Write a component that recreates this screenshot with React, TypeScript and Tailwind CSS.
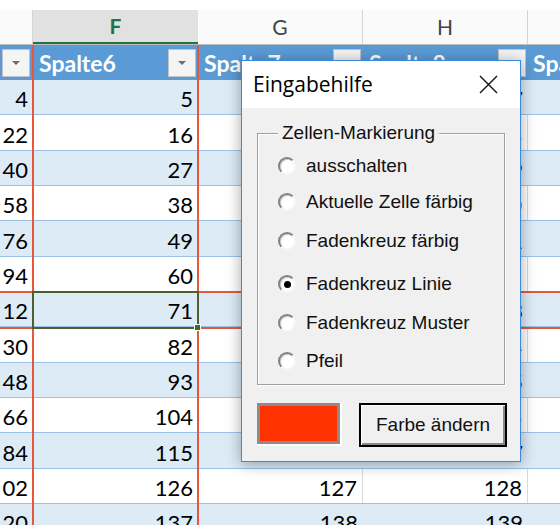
const sheet = '"Lato", "Noto Sans", sans-serif'
const ui = '"Liberation Sans", Arial, sans-serif'

const rows = Array.from({ length: 13 }, (_, i) => i)
const options = [
  { label: 'ausschalten', gap: 'mt-[12px]' },
  { label: 'Aktuelle Zelle färbig', gap: 'mt-[16px]' },
  { label: 'Fadenkreuz färbig', gap: 'mt-[19px]' },
  { label: 'Fadenkreuz Linie', gap: 'mt-[23px]', checked: true },
  { label: 'Fadenkreuz Muster', gap: 'mt-[19px]' },
  { label: 'Pfeil', gap: 'mt-[18px]' },
]

function FilterButton() {
  return (
    <span className="flex h-[28px] w-[28px] shrink-0 items-center justify-center border border-[#c3c3c3] bg-[#f4f4f4]">
      <svg width="10" height="6" viewBox="0 0 10 6">
        <path d="M1 1h8L5 5z" fill="#6d6d6d" />
      </svg>
    </span>
  )
}

function HeaderCell({ name }: { name: string }) {
  return (
    <div className="flex h-full w-[165px] shrink-0 items-center justify-between overflow-hidden pr-[2px] pl-[6px]">
      <span className="pt-[2px] text-[23px] font-bold whitespace-nowrap text-white">{name}</span>
      <FilterButton />
    </div>
  )
}

function Radio({ checked }: { checked?: boolean }) {
  return (
    <span className="flex h-[18px] w-[18px] shrink-0 items-center justify-center rounded-full border-2 border-t-[#828282] border-r-[#f6f6f6] border-b-[#f6f6f6] border-l-[#828282] bg-white shadow-[inset_1px_1px_0_#d0d0d0]">
      {checked && <span className="h-[7px] w-[7px] rounded-full bg-black" />}
    </span>
  )
}

function Cell({ value, lined }: { value: string; lined: boolean }) {
  return (
    <div
      className={`flex h-full w-[165px] shrink-0 items-end justify-end overflow-hidden pr-[5px] pb-[4px] ${lined ? 'border-r border-[#d9d9d9]' : ''}`}
    >
      <span className="text-[22px] leading-none whitespace-nowrap text-black">{value}</span>
    </div>
  )
}

export default function App() {
  return (
    <div className="relative h-[525px] w-[560px] overflow-hidden bg-white" style={{ fontFamily: sheet }}>
      <div className="h-[10px]" />

      {/* column letters */}
      <div className="flex h-[35px] border-b border-[#bdbdbd] text-[21px]">
        <div className="w-[33px] shrink-0 border-r border-[#d4d4d4] bg-[#fafafa]" />
        <div className="flex w-[165px] shrink-0 items-center justify-center border-b-2 border-[#217346] bg-[#e1e1e1] font-bold text-[#217346]">
          F
        </div>
        <div className="flex w-[165px] shrink-0 items-center justify-center border-r border-[#d4d4d4] bg-[#fafafa] text-[#444]">
          G
        </div>
        <div className="flex w-[165px] shrink-0 items-center justify-center border-r border-[#d4d4d4] bg-[#fafafa] text-[#444]">
          H
        </div>
        <div className="flex-1 bg-[#fafafa]" />
      </div>

      {/* table header */}
      <div className="flex h-[35px] bg-[#5b9bd5]">
        <div className="flex w-[33px] shrink-0 items-center pl-[2px]">
          <FilterButton />
        </div>
        <HeaderCell name="Spalte6" />
        <HeaderCell name="Spalte7" />
        <HeaderCell name="Spalte8" />
        <div className="flex min-w-0 flex-1 items-center overflow-hidden pl-[5px]">
          <span className="pt-[2px] text-[23px] font-bold whitespace-nowrap text-white">Spalte9</span>
        </div>
      </div>

      {/* table body */}
      {rows.map((i) => {
        const band = i % 2 === 0
        const f = 5 + 11 * i
        return (
          <div
            key={i}
            className={`flex ${i % 3 === 1 ? 'h-[36px]' : 'h-[35px]'} border-b border-[#9bc2e6] ${band ? 'bg-[#ddebf7]' : 'bg-white'}`}
          >
            {/* column E is scrolled off to the left, only its last digits show */}
            <div className="flex h-full w-[33px] shrink-0 items-end justify-end overflow-hidden pr-[5px] pb-[4px]">
              <span className="text-[22px] leading-none text-black">{String(4 + 18 * i).slice(-2)}</span>
            </div>
            <Cell value={String(f)} lined={false} />
            <Cell value={String(f + 1)} lined={!band} />
            <Cell value={String(f + 2)} lined={!band} />
            <div className="flex-1" />
          </div>
        )
      })}

      {/* crosshair */}
      <div className="absolute top-[45px] bottom-0 left-[32px] w-[2px] bg-[#e5583b]" />
      <div className="absolute top-[45px] bottom-0 left-[197px] w-[2px] bg-[#e5583b]" />
      <div className="absolute top-[291px] right-0 left-0 h-[2px] bg-[#e5583b]" />
      <div className="absolute top-[327px] right-0 left-0 h-[2px] bg-[#e5583b]" />

      {/* active cell F7 */}
      <span className="absolute top-[291px] left-[32px] h-[38px] w-[167px] border-2 border-[#4f5f2c]">
        <span className="absolute -right-[4px] -bottom-[4px] h-[7px] w-[7px] border border-white bg-[#3d6b2f]" />
      </span>

      {/* dialog */}
      <div
        className="absolute top-[60px] left-[241px] flex h-[402px] w-[280px] flex-col border border-[#3c88dc] bg-[#f0f0f0] shadow-[0_2px_14px_rgba(0,0,0,0.35)]"
        style={{ fontFamily: ui }}
      >
        <div className="flex h-[47px] shrink-0 items-center justify-between bg-white pr-[22px] pl-[11px]">
          <span className="text-[21px] text-black" style={{ fontFamily: '"Open Sans", sans-serif' }}>
            Eingabehilfe
          </span>
          <svg width="19" height="19" viewBox="0 0 19 19">
            <path d="M1 1l17 17M18 1L1 18" stroke="#111" strokeWidth="1.4" fill="none" />
          </svg>
        </div>

        <div className="mx-[15px] mt-[25px] border border-[#a0a0a0] pb-[13px] shadow-[1px_1px_0_#fff,inset_1px_1px_0_#fff]">
          <span className="-mt-[12px] ml-[20px] block w-fit bg-[#f0f0f0] px-[4px] text-[19px] leading-[22px] text-[#111]">
            Zellen-Markierung
          </span>
          {options.map((o) => (
            <div key={o.label} className={`flex h-[20px] items-center gap-[10px] pl-[20px] ${o.gap}`}>
              <Radio checked={o.checked} />
              <span className="text-[19px] whitespace-nowrap text-[#111]">{o.label}</span>
            </div>
          ))}
        </div>

        <div className="mt-[18px] flex items-start gap-[17px] pl-[15px]">
          <span className="block border-r-2 border-b-2 border-white">
            <span className="block h-[41px] w-[83px] border-[3px] border-[#8c8c8c] bg-[#ff3300]" />
          </span>
          <button className="flex h-[44px] w-[148px] items-center justify-center border-2 border-black bg-[#f0f0f0] text-[19px] text-[#111] shadow-[inset_1px_1px_0_#fff,inset_-2px_-2px_0_#8a8a8a]">
            Farbe ändern
          </button>
        </div>
      </div>
    </div>
  )
}
